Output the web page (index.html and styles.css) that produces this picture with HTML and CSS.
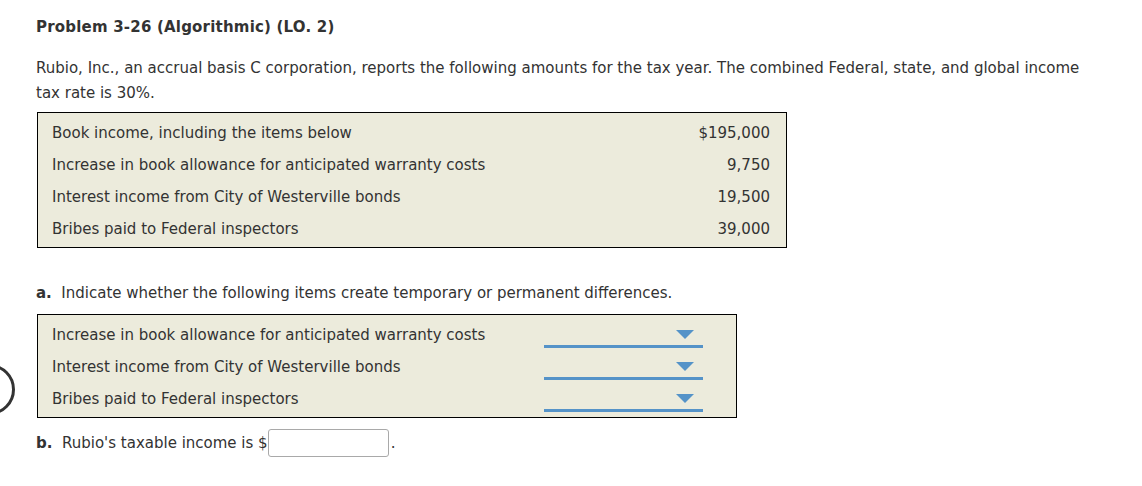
FILE: index.html
```html
<!DOCTYPE html>
<html>
<head>
<meta charset="utf-8">
<link rel="stylesheet" href="styles.css">
</head>
<body>
<div class="ring"></div>
<div class="page">
  <h1 class="title">Problem 3-26 (Algorithmic) (LO. 2)</h1>
  <p class="intro">Rubio, Inc., an accrual basis C corporation, reports the following amounts for the tax year. The combined Federal, state, and global income tax rate is 30%.</p>

  <div class="box box-amounts">
    <div class="row"><span class="label">Book income, including the items below</span><span class="amt">$195,000</span></div>
    <div class="row"><span class="label">Increase in book allowance for anticipated warranty costs</span><span class="amt">9,750</span></div>
    <div class="row"><span class="label">Interest income from City of Westerville bonds</span><span class="amt">19,500</span></div>
    <div class="row"><span class="label">Bribes paid to Federal inspectors</span><span class="amt">39,000</span></div>
  </div>

  <p class="q q-a"><b>a.</b>&nbsp; Indicate whether the following items create temporary or permanent differences.</p>

  <div class="box box-select">
    <div class="row"><span class="label">Increase in book allowance for anticipated warranty costs</span><span class="select"><span class="caret"></span></span></div>
    <div class="row"><span class="label">Interest income from City of Westerville bonds</span><span class="select"><span class="caret"></span></span></div>
    <div class="row"><span class="label">Bribes paid to Federal inspectors</span><span class="select"><span class="caret"></span></span></div>
  </div>

  <p class="q q-b"><b>b.</b>&nbsp; Rubio's taxable income is $<span class="input"></span>.</p>
</div>
</body>
</html>
```
FILE: styles.css
```css
html, body {
  margin: 0;
  padding: 0;
  background: #fff;
}
body {
  font-family: "DejaVu Sans", Verdana, sans-serif;
  font-size: 15px;
  color: #333;
  position: relative;
  width: 1142px;
  height: 486px;
  overflow: hidden;
}
.page {
  padding: 17px 0 0 36px;
  width: 1060px;
}
.title {
  margin: 0;
  font-size: 15px;
  font-weight: bold;
  line-height: 20px;
  letter-spacing: 0.2px;
}
.intro {
  margin: 19px 0 0 0;
  line-height: 25px;
}
.box {
  margin-left: 1px;
  border: 1px solid #000;
  background: #ecebdc;
  padding: 4px 0 2px 0;
  box-sizing: border-box;
}
.box-amounts {
  width: 750px;
  margin-top: 6px;
}
.box-select {
  width: 700px;
  margin-top: 0;
}
.row {
  height: 32px;
  display: flex;
  align-items: center;
  justify-content: space-between;
  padding: 0 16px 0 14px;
}
.label {
  white-space: nowrap;
}
.box-select .row {
  padding-right: 33px;
}
.select {
  width: 159px;
  position: relative;
  box-sizing: border-box;
  border-bottom: 3px solid #5593c8;
  align-self: flex-start;
  margin-top: 13px;
  height: 16px;
}
.caret {
  position: absolute;
  right: 9px;
  top: -2px;
  width: 0;
  height: 0;
  border-left: 9px solid transparent;
  border-right: 9px solid transparent;
  border-top: 9px solid #5593c8;
}
.q {
  margin: 0;
  line-height: 20px;
}
.q-a {
  margin-top: 35px;
  margin-bottom: 11px;
}
.q-b {
  margin-top: 11px;
  display: flex;
  align-items: center;
  height: 28px;
}
.input {
  display: inline-block;
  width: 121px;
  height: 28px;
  box-sizing: border-box;
  border: 1px solid #a9a9a9;
  border-radius: 3px;
  background: #fff;
  margin: 0 2px 0 0;
}
.ring {
  position: absolute;
  left: -36px;
  top: 364px;
  width: 45px;
  height: 45px;
  border: 3px solid #333;
  border-radius: 50%;
}
```
